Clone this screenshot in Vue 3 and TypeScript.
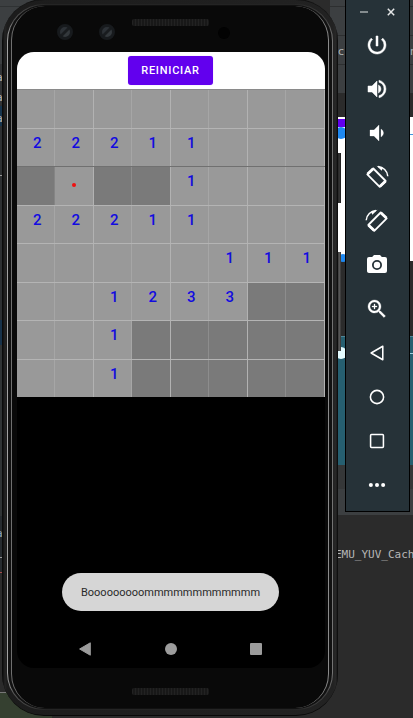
<script setup lang="ts">
interface Cell {
  value: string
  hidden: boolean
}

// '#': covered cell, '*': detonated mine, '.': empty
const rows: string[] = [
  '........',
  '22211...',
  '#*##1...',
  '22211...',
  '.....111',
  '..1233##',
  '..1#####',
  '..1#####',
]

const board: Cell[][] = rows.map((row) =>
  [...row].map((c) => ({ value: /[0-9*]/.test(c) ? c : '', hidden: c === '#' })),
)

const boom: string = 'B' + 'o'.repeat(9) + 'm'.repeat(12)
</script>

<template>
  <main class="desktop">
    <div class="ide-left">
      <i class="l1"></i><i class="l2"></i><i class="l3"></i><i class="l4"></i><i class="l5"></i><i class="l6"></i>
      <span class="frag f1">a</span><span class="frag f2">a</span><span class="frag f3">a</span>
      <span class="frag f4">a</span>
    </div>
    <div class="ide-right">
      <div class="tabs"><i></i><i></i><i></i><span>c</span><b>n</b></div>
      <div class="gap"></div>
      <div class="canvas"><i class="purple"></i><i class="hline"></i><i class="dot d1"></i><i class="dot d2"></i></div>
      <div class="panel"></div>
      <div class="teal"><i class="tline"></i><i class="dot d3"></i></div>
      <div class="strip s1"></div>
      <div class="strip s2"></div>
      <div class="log">EMU_YUV_Cach</div>
    </div>
    <i class="side b1"></i>
    <i class="side b2"></i>

    <section class="phone">
      <div class="rim">
        <div class="rim-dark">
          <div class="rim-inner">
            <header class="bezel-top">
              <i class="lens"></i><i class="lens second"></i><i class="speaker"></i><i class="sensor"></i>
            </header>
            <div class="screen">
              <div class="appbar"><button class="restart">REINICIAR</button></div>
              <div class="board">
                <div v-for="(row, y) in board" :key="y" class="row" :class="'r' + y">
                  <div v-for="(cell, x) in row" :key="x" class="cell" :class="{ hidden: cell.hidden }">
                    <i v-if="cell.value === '*'" class="mine"></i>
                    <template v-else>{{ cell.value }}</template>
                  </div>
                </div>
              </div>
              <div class="rest">
                <div class="toast">{{ boom }}</div>
              </div>
              <nav class="nav">
                <svg width="12" height="14" viewBox="0 0 12 14"><path d="M11.3 .8v12.4L.6 7z" fill="#9c9c9c" stroke="#9c9c9c" stroke-linejoin="round" /></svg>
                <i class="home"></i>
                <i class="recent"></i>
              </nav>
            </div>
            <footer class="bezel-bottom"><i class="speaker"></i></footer>
          </div>
        </div>
      </div>
    </section>

    <aside class="tools">
      <div class="win">
        <svg width="8" height="8" viewBox="0 0 8 8"><path d="M0 4h8" stroke="#aeb3b5" stroke-width="1.4" /></svg>
        <svg width="8" height="8" viewBox="0 0 8 8"><path d="M.8.8l6.4 6.4M7.2.8L.8 7.2" stroke="#e4e6e7" stroke-width="1.5" /></svg>
      </div>
      <div class="tool"><svg viewBox="0 0 24 24"><path d="M13 3h-2v10h2V3zm4.83 2.17-1.42 1.42A6.92 6.92 0 0 1 19 12a7 7 0 1 1-11.42-5.42L6.17 5.17A9 9 0 1 0 21 12a8.94 8.94 0 0 0-3.17-6.83z" stroke="#fff" stroke-width=".5" /></svg></div>
      <div class="tool"><svg viewBox="0 0 24 24"><path d="M3 9v6h4l5 5V4L7 9H3zm10.500-1v8A4.500 4.500 0 0 0 16 12a4.500 4.500 0 0 0-2.500-4zM14 3.230v2.060a7 7 0 0 1 0 13.420v2.060a9 9 0 0 0 0-17.540z" stroke="#fff" stroke-width=".5" /></svg></div>
      <div class="tool"><svg viewBox="0 0 24 24"><path d="M18.500 12A4.500 4.500 0 0 0 16 7.970v8.050A4.500 4.500 0 0 0 18.500 12zM5 9v6h4l5 5V4L9 9H5z" stroke="#fff" stroke-width=".3" /></svg></div>
      <div class="tool rot"><svg viewBox="0 0 24 24"><g fill="none" stroke="#fff"><path d="M8.300 3.500L20.700 16l-6 5.800L2.300 9.300z" stroke-width="1.800" stroke-linejoin="round" /><path d="M2.600 9L8.200 3.700M20.400 16.200l-5.600 5.400" stroke-width="2.800" /><path d="M13 1.600a10.500 10.500 0 0 1 9.800 9.600" stroke-width="1.500" /></g><path d="M11.500 .8l5.200 5 1.200-3z" /></svg></div>
      <div class="tool rot"><svg viewBox="0 0 24 24"><g fill="none" stroke="#fff"><path d="M15.700 3.500L3.300 16l6 5.800L21.700 9.300z" stroke-width="1.800" stroke-linejoin="round" /><path d="M21.400 9L15.800 3.700M3.600 16.200l5.600 5.400" stroke-width="2.800" /><path d="M11 1.600a10.500 10.500 0 0 0-9.800 9.600" stroke-width="1.500" /></g><path d="M12.500 .8l-5.200 5-1.200-3z" /></svg></div>
      <div class="tool"><svg viewBox="0 0 24 24"><path fill-rule="evenodd" d="M9 2 7.170 4H4a2 2 0 0 0-2 2v12c0 1.100.9 2 2 2h16a2 2 0 0 0 2-2V6a2 2 0 0 0-2-2h-3.170L15 2H9zm3 15a5 5 0 1 1 0-10 5 5 0 0 1 0 10zm0-1.800a3.200 3.200 0 1 0 0-6.400 3.200 3.200 0 0 0 0 6.400z" /></svg></div>
      <div class="tool"><svg viewBox="0 0 24 24"><path d="M15.500 14h-.79l-.28-.27A6.500 6.500 0 1 0 13.730 14.430l.27.28v.79l5 4.990L20.490 19l-4.990-5zm-6 0a4.500 4.500 0 1 1 0-9 4.500 4.500 0 0 1 0 9zM12 10h-2v2H9v-2H7V9h2V7h1v2h2v1z" stroke="#fff" stroke-width=".3" /></svg></div>
      <div class="tool small"><svg viewBox="0 0 24 24"><path class="line" d="M18.300 4.600v14.800L5.600 12z" /></svg></div>
      <div class="tool small"><svg viewBox="0 0 24 24"><circle class="line" cx="12" cy="12" r="7.200" /></svg></div>
      <div class="tool small"><svg viewBox="0 0 24 24"><rect class="line" x="5" y="5" width="14" height="14" rx="1" /></svg></div>
      <div class="tool small"><svg viewBox="0 0 24 24"><circle cx="5.300" cy="12" r="2.200" /><circle cx="12" cy="12" r="2.200" /><circle cx="18.700" cy="12" r="2.200" /></svg></div>
    </aside>
  </main>
</template>

<style>
body {
  background: #2b2b2b;
  overflow: hidden;
}
</style>

<style scoped>
* {
  box-sizing: border-box;
}
i {
  display: block;
  flex: none;
}
.desktop {
  position: relative;
  width: 413px;
  height: 718px;
  overflow: hidden;
  background: #2b2b2b;
  font-family: Roboto, sans-serif;
}
.ide-left {
  position: absolute;
  left: 0;
  top: 0;
  width: 52px;
  height: 718px;
  background: linear-gradient(#3c3f41 0 64px, #313335 64px 105px, #2d3032 105px 320px, #17324a 320px 345px, #303435 345px 516px, #262b2f 516px 572px, #2b2b2b 572px 692px, #354030 692px);
}
.ide-left i {
  position: absolute;
  left: 0;
  width: 3px;
  height: 1px;
  background: #999;
}
.ide-left .l1 { top: 6px; width: 30px; background: #2f3233; }
.ide-left .l2 { top: 175px; }
.ide-left .l3 { top: 557px; }
.ide-left .l4 { top: 572px; background: #a54b4b; }
.ide-left .l5 { top: 692px; width: 6px; background: #777; }
.ide-left .l6 { top: 106px; height: 20px; background: #16344d; }
.frag {
  position: absolute;
  left: -4px;
  font: 11px "DejaVu Sans Mono", monospace;
  color: #b8b8b8;
}
.f1 { top: 71px; }
.f2 { top: 91px; }
.f3 { top: 112px; }
.f4 { top: 527px; color: #91a7bb; }
.ide-right {
  position: absolute;
  left: 330px;
  top: 0;
  width: 83px;
  height: 718px;
}
.tabs {
  position: relative;
  height: 93px;
  background: #3c3f41;
  font: 11px/14px "DejaVu Sans", sans-serif;
  color: #aeb1b2;
}
.tabs i {
  height: 29px;
  border-bottom: 1px solid #2d2f30;
}
.tabs i:first-child { height: 7px; }
.tabs span, .tabs b {
  position: absolute;
  top: 45px;
  left: 8px;
  font-weight: 400;
}
.tabs b { left: 80px; }
.gap { height: 24px; background: #2b2b2b; }
.canvas { position: relative; height: 144px; background: #fff; }
.purple { position: absolute; left: 8px; top: 2px; width: 8px; height: 8px; background: #6200ee; }
.hline { position: absolute; left: 78px; top: 17px; width: 5px; height: 1px; background: #3d94dc; }
.dot { position: absolute; border-radius: 50%; background: #1e88f0; }
.d1 { left: 5px; top: 10px; width: 12px; height: 12px; }
.d2 { left: 9px; top: 137px; width: 8px; height: 8px; }
.panel { height: 75px; background: #2b2b2b; }
.teal { position: relative; height: 129px; background: #265f70; }
.tline { height: 1px; background: #4e8799; }
.teal::after {
  content: "";
  position: absolute;
  right: 0;
  top: 17px;
  width: 5px;
  height: 1px;
  background: #9ed0df;
}
.d3 { left: 5px; top: 11px; width: 12px; height: 12px; background: #e4fbff; }
.strip { background: #353738; height: 24px; }
.s2 { height: 26px; background: #3c3f41; }
.log {
  padding: 33px 0 0 5px;
  font: 11px/14px "DejaVu Sans Mono", monospace;
  color: #b6b6b6;
  white-space: nowrap;
}
.side {
  position: absolute;
  left: 336px;
  width: 5px;
  background: linear-gradient(90deg, #181818, #333 70%, #1b1b1b);
}
.b1 { top: 153px; height: 50px; }
.b2 { top: 252px; height: 99px; background: linear-gradient(90deg, #181818, #555 70%, #333); }
.phone {
  position: absolute;
  left: 2px;
  top: -1px;
  width: 336px;
  height: 717px;
  padding: 4px 5px 5px;
  border-radius: 42px;
  background: linear-gradient(90deg, #060606, #242424 3px, #1c1c1c 5px, #222 331px, #282828 334px, #060606);
  border-top: 1px solid #111;
  border-bottom: 1px solid #090909;
}
.rim {
  height: 100%;
  padding: 1px;
  border-radius: 37px;
  background: linear-gradient(90deg, #a8a8a8, #555 2%, #242424 12% 88%, #444 98%, #777);
}
.rim-dark {
  height: 100%;
  padding: 1px 3px;
  border-radius: 36px;
  background: #111;
}
.rim-inner {
  display: flex;
  flex-direction: column;
  height: 100%;
  padding: 0 0 0 5px;
  border-left: 1px solid #707070;
  border-right: 1px solid #8b8b8b;
  border-radius: 34px;
  background: #090909;
}
.bezel-top {
  display: flex;
  align-items: flex-start;
  flex: none;
  height: 46px;
  padding: 17px 0 0 40px;
}
.lens {
  width: 16px;
  height: 16px;
  margin-top: 1px;
  border-radius: 50%;
  border: 3px solid #171a1d;
  background: linear-gradient(135deg, #2c3136 35%, #191c1f 45% 55%, #33383c 65%);
}
.second { margin-left: 26px; }
.speaker {
  width: 77px;
  height: 7px;
  border-radius: 2px;
  background: repeating-linear-gradient(90deg, #222 0 1px, #181818 1px 3px);
}
.bezel-top .speaker { margin: -4px 0 0 17px; }
.sensor {
  width: 12px;
  height: 12px;
  margin: 4px 0 0 9px;
  border-radius: 50%;
  background: #020202;
}
.screen {
  display: flex;
  flex-direction: column;
  flex: none;
  height: 616px;
  width: 308px;
  border-radius: 17px;
  overflow: hidden;
  background: #000;
}
.appbar {
  display: flex;
  justify-content: center;
  height: 37px;
  padding: 4px 1px 0 0;
  background: #fff;
}
.restart {
  width: 85px;
  height: 29px;
  padding: 0;
  border: 0;
  border-radius: 3px;
  background: #6200ee;
  color: #fff;
  font: 500 11px/30px Roboto, sans-serif;
  letter-spacing: 0.75px;
  box-shadow: 0 0 1px #c9a6f5;
}
.board {
  flex: none;
  width: 308px;
  height: 308px;
  margin-left: -0.5px;
}
.row {
  display: flex;
  height: 38.500px;
  border-top: 1px solid #b4b4b4;
}
.r0 { border-top-color: #8a8a8a; }
.r2 { border-top-color: #707070; }
.cell {
  display: flex;
  justify-content: center;
  width: 38.500px;
  padding: 5px 0 0 4px;
  border-right: 1px solid #b2b2b2;
  background: #999;
  color: #120be0;
  font: 500 15px/19px Roboto, sans-serif;
}
.cell:nth-child(odd) { border-right-color: #a6a6a6; }
.hidden { background: #7a7a7a; }
.hidden:nth-child(odd) { border-right-color: #8d8d8d; }
.r2 .cell:first-child { border-right-color: #858585; }
.mine {
  width: 4px;
  height: 4px;
  margin: 11px 3px 0 0;
  border-radius: 50%;
  background: #f01010;
}
.rest {
  flex: 1;
  display: flex;
  align-items: flex-end;
  justify-content: center;
}
.toast {
  width: 217px;
  height: 38px;
  margin-right: 1px;
  border-radius: 19px;
  background: #d6d6d6;
  color: #292929;
  font: 11px/39px Roboto, sans-serif;
  text-align: center;
}
.nav {
  display: flex;
  justify-content: space-between;
  align-items: center;
  height: 57px;
  padding: 19px 63px 0 62px;
}
.home {
  width: 12px;
  height: 12px;
  border-radius: 50%;
  background: #9c9c9c;
}
.recent {
  width: 12px;
  height: 12px;
  border-radius: 1px;
  background: #9c9c9c;
}
.bezel-bottom {
  display: flex;
  justify-content: center;
  padding-top: 20px;
  padding-right: 4px;
}
.tools {
  position: absolute;
  left: 345px;
  top: -1px;
  width: 65px;
  height: 513px;
  border: 1px solid #000;
  background: #263238;
}
.win {
  display: flex;
  justify-content: space-between;
  align-items: center;
  height: 23px;
  padding: 1px 14px 0;
}
.tool {
  display: flex;
  justify-content: center;
  align-items: center;
  height: 44px;
  padding-right: 1px;
}
.tool svg {
  width: 24px;
  height: 24px;
  fill: #fff;
}
.small svg {
  width: 22px;
  height: 22px;
}
.line {
  fill: none;
  stroke: #fff;
  stroke-width: 1.700;
  stroke-linejoin: round;
}
</style>
